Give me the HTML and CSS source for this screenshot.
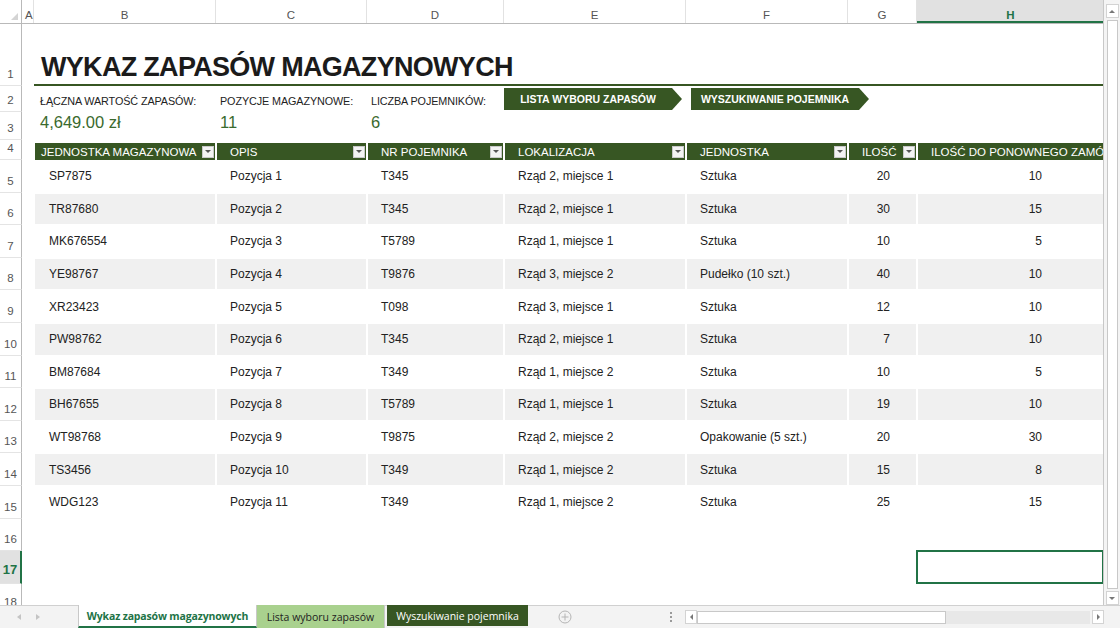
FILE: index.html
```html
<!DOCTYPE html>
<html lang="pl">
<head>
<meta charset="utf-8">
<title>Wykaz zapasów magazynowych</title>
<link rel="stylesheet" href="styles.css">
</head>
<body>
<div class="excel">
  <div class="main">
    <div class="grid">
      <div class="row colheads">
        <div class="corner"><span class="tri"></span></div>
        <div class="ch">A</div>
        <div class="ch">B</div>
        <div class="ch">C</div>
        <div class="ch">D</div>
        <div class="ch">E</div>
        <div class="ch">F</div>
        <div class="ch">G</div>
        <div class="ch sel">H</div>
      </div>

      <div class="row r1">
        <div class="rh">1</div>
        <div></div>
        <div class="title-cell"><h1 class="title">WYKAZ ZAPASÓW MAGAZYNOWYCH</h1></div>
      </div>

      <div class="row r2">
        <div class="rh">2</div>
        <div></div>
        <div class="lbl first">ŁĄCZNA WARTOŚĆ ZAPASÓW:</div>
        <div class="lbl">POZYCJE MAGAZYNOWE:</div>
        <div class="lbl">LICZBA POJEMNIKÓW:</div>
        <div class="btn-cell"><span class="arrow-btn">LISTA WYBORU ZAPASÓW</span></div>
        <div class="btn-cell second"><span class="arrow-btn">WYSZUKIWANIE POJEMNIKA</span></div>
        <div></div>
      </div>

      <div class="row r3">
        <div class="rh">3</div>
        <div></div>
        <div class="val first">4,649.00 zł</div>
        <div class="val">11</div>
        <div class="val">6</div>
        <div></div><div></div><div></div><div></div>
      </div>

      <div class="row r4">
        <div class="rh">4</div>
        <div></div>
        <div class="th first"><span>JEDNOSTKA MAGAZYNOWA</span><i class="flt"></i></div>
        <div class="th"><span>OPIS</span><i class="flt"></i></div>
        <div class="th"><span>NR POJEMNIKA</span><i class="flt"></i></div>
        <div class="th"><span>LOKALIZACJA</span><i class="flt"></i></div>
        <div class="th"><span>JEDNOSTKA</span><i class="flt"></i></div>
        <div class="th"><span>ILOŚĆ</span><i class="flt"></i></div>
        <div class="th last"><span>ILOŚĆ DO PONOWNEGO ZAMÓWIENIA</span></div>
      </div>

      <div class="row dr">
        <div class="rh">5</div><div></div>
        <div class="td">SP7875</div><div class="td">Pozycja 1</div><div class="td">T345</div><div class="td">Rząd 2, miejsce 1</div><div class="td">Sztuka</div><div class="td num">20</div><div class="td num2">10</div>
      </div>
      <div class="row dr alt">
        <div class="rh">6</div><div></div>
        <div class="td">TR87680</div><div class="td">Pozycja 2</div><div class="td">T345</div><div class="td">Rząd 2, miejsce 1</div><div class="td">Sztuka</div><div class="td num">30</div><div class="td num2">15</div>
      </div>
      <div class="row dr">
        <div class="rh">7</div><div></div>
        <div class="td">MK676554</div><div class="td">Pozycja 3</div><div class="td">T5789</div><div class="td">Rząd 1, miejsce 1</div><div class="td">Sztuka</div><div class="td num">10</div><div class="td num2">5</div>
      </div>
      <div class="row dr alt">
        <div class="rh">8</div><div></div>
        <div class="td">YE98767</div><div class="td">Pozycja 4</div><div class="td">T9876</div><div class="td">Rząd 3, miejsce 2</div><div class="td">Pudełko (10 szt.)</div><div class="td num">40</div><div class="td num2">10</div>
      </div>
      <div class="row dr">
        <div class="rh">9</div><div></div>
        <div class="td">XR23423</div><div class="td">Pozycja 5</div><div class="td">T098</div><div class="td">Rząd 3, miejsce 1</div><div class="td">Sztuka</div><div class="td num">12</div><div class="td num2">10</div>
      </div>
      <div class="row dr alt">
        <div class="rh">10</div><div></div>
        <div class="td">PW98762</div><div class="td">Pozycja 6</div><div class="td">T345</div><div class="td">Rząd 2, miejsce 1</div><div class="td">Sztuka</div><div class="td num">7</div><div class="td num2">10</div>
      </div>
      <div class="row dr">
        <div class="rh">11</div><div></div>
        <div class="td">BM87684</div><div class="td">Pozycja 7</div><div class="td">T349</div><div class="td">Rząd 1, miejsce 2</div><div class="td">Sztuka</div><div class="td num">10</div><div class="td num2">5</div>
      </div>
      <div class="row dr alt">
        <div class="rh">12</div><div></div>
        <div class="td">BH67655</div><div class="td">Pozycja 8</div><div class="td">T5789</div><div class="td">Rząd 1, miejsce 1</div><div class="td">Sztuka</div><div class="td num">19</div><div class="td num2">10</div>
      </div>
      <div class="row dr">
        <div class="rh">13</div><div></div>
        <div class="td">WT98768</div><div class="td">Pozycja 9</div><div class="td">T9875</div><div class="td">Rząd 2, miejsce 2</div><div class="td">Opakowanie (5 szt.)</div><div class="td num">20</div><div class="td num2">30</div>
      </div>
      <div class="row dr alt">
        <div class="rh">14</div><div></div>
        <div class="td">TS3456</div><div class="td">Pozycja 10</div><div class="td">T349</div><div class="td">Rząd 1, miejsce 2</div><div class="td">Sztuka</div><div class="td num">15</div><div class="td num2">8</div>
      </div>
      <div class="row dr">
        <div class="rh">15</div><div></div>
        <div class="td">WDG123</div><div class="td">Pozycja 11</div><div class="td">T349</div><div class="td">Rząd 1, miejsce 2</div><div class="td">Sztuka</div><div class="td num">25</div><div class="td num2">15</div>
      </div>
      <div class="row er">
        <div class="rh">16</div>
      </div>
      <div class="row er">
        <div class="rh sel">17</div>
        <div class="selcell"></div>
      </div>
      <div class="row er last">
        <div class="rh">18</div>
      </div>
    </div>
    <div class="vscroll">
      <div class="sb-btn"><i class="up"></i></div>
      <div class="vthumb"></div>
      <div class="sb-btn"><i class="down"></i></div>
    </div>
  </div>

  <div class="tabbar">
    <div class="tabnav">
      <i class="nav-l"></i>
      <i class="nav-r"></i>
    </div>
    <div class="tab active">Wykaz zapasów magazynowych</div>
    <div class="tab light">Lista wyboru zapasów</div>
    <div class="tab dark">Wyszukiwanie pojemnika</div>
    <div class="addtab">
      <svg width="14" height="14" viewBox="0 0 14 14"><circle cx="7" cy="7" r="6" fill="none" stroke="#b5b5b5" stroke-width="1"/><path d="M7 3.5v7M3.5 7h7" stroke="#b5b5b5" stroke-width="1"/></svg>
    </div>
    <div class="dots"><i></i><i></i><i></i></div>
    <div class="hscroll">
      <div class="sb-btn h"><i class="left"></i></div>
      <div class="hthumb"></div>
      <div class="htrack"></div>
      <div class="sb-btn h"><i class="right"></i></div>
    </div>
  </div>
</div>
</body>
</html>
```

FILE: styles.css
```css
* { box-sizing: border-box; }

html, body {
  margin: 0;
  padding: 0;
  background: #ffffff;
}

body {
  width: 1120px;
  height: 628px;
  overflow: hidden;
  font-family: "Liberation Sans", Arial, sans-serif;
  color: #222;
}

.excel {
  display: flex;
  flex-direction: column;
  width: 1120px;
  height: 628px;
}

.main {
  display: flex;
  height: 605px;
  flex: none;
}

.grid {
  width: 1104px;
  height: 605px;
  overflow: hidden;
  border-right: 1px solid #c8c8c8;
}

.row {
  display: grid;
  grid-template-columns: 22px 12px 182px 151px 137px 182px 162px 69px 187px;
}

/* column headers */
.colheads {
  height: 24px;
  border-bottom: 1px solid #b9b9b9;
}

.corner {
  position: relative;
  border-right: 1px solid #b9b9b9;
}

.corner .tri {
  position: absolute;
  right: 3px;
  bottom: 3px;
  width: 0;
  height: 0;
  border-left: 7px solid transparent;
  border-bottom: 7px solid #d4d4d4;
}

.ch {
  font-size: 11.5px;
  color: #555;
  text-align: center;
  padding-top: 9px;
  border-right: 1px solid #e2e2e2;
}

.ch:nth-child(2) {
  text-align: left;
  padding-left: 3px;
}

.ch.sel {
  background: #e1e1e1;
  color: #217346;
  font-weight: bold;
  border-bottom: 2px solid #217346;
  border-right: none;
}

/* row headers */
.rh {
  font-size: 11.5px;
  color: #555;
  text-align: center;
  border-right: 1px solid #b9b9b9;
  border-bottom: 1px solid #e4e4e4;
  display: flex;
  align-items: flex-end;
  justify-content: center;
  padding-bottom: 5px;
}

.er.last .rh {
  align-items: flex-start;
  padding-top: 12px;
  padding-bottom: 0;
}

.rh.sel {
  background: #e1e1e1;
  color: #217346;
  font-weight: bold;
  font-size: 13px;
  border-right: 2px solid #217346;
  padding-bottom: 6px;
}

/* title row */
.r1 { height: 62px; }

.title-cell {
  grid-column: 3 / 10;
  border-bottom: 2px solid #375623;
  display: flex;
  align-items: flex-end;
  padding-left: 7px;
  padding-bottom: 2px;
}

.title {
  margin: 0;
  font-size: 27px;
  font-weight: bold;
  letter-spacing: -0.7px;
  color: #1b1b1b;
  line-height: 30px;
}

/* stats */
.r2 { height: 26px; }
.r3 { height: 28px; }

.lbl {
  font-size: 10.8px;
  color: #222;
  padding-left: 4px;
  padding-top: 9px;
  white-space: nowrap;
  letter-spacing: -0.1px;
}

.lbl.first { padding-left: 6px; }

.btn-cell {
  padding-top: 2px;
}

.btn-cell.second {
  grid-column: span 2;
  padding-left: 5px;
}

.arrow-btn {
  display: flex;
  align-items: center;
  justify-content: center;
  width: 178px;
  height: 22px;
  padding-right: 10px;
  background: #375623;
  color: #fff;
  font-size: 10.5px;
  font-weight: bold;
  clip-path: polygon(0 0, 168px 0, 178px 50%, 168px 100%, 0 100%);
}

.val {
  font-size: 16.5px;
  color: #3a6a2e;
  padding-left: 4px;
  padding-top: 1px;
}

.val.first { padding-left: 6px; }

/* table header */
.r4 { height: 20px; }

.th {
  margin: 3px 1px 0 1px;
  background: #375623;
  color: #fff;
  font-size: 11.5px;
  display: flex;
  align-items: center;
  justify-content: space-between;
  padding-left: 13px;
  padding-right: 1px;
  white-space: nowrap;
  overflow: hidden;
}

.th.first { padding-left: 6px; }

.th.last { margin-right: 0; }

.flt {
  flex: none;
  width: 12px;
  height: 12px;
  background: #f3f3f3;
  border: 1px solid #c9c9c9;
  display: flex;
  align-items: center;
  justify-content: center;
}

.flt::after {
  content: "";
  width: 0;
  height: 0;
  border-left: 3px solid transparent;
  border-right: 3px solid transparent;
  border-top: 3px solid #555;
}

/* data rows */
.dr, .er { height: 32.6px; }

.td {
  margin: 1px;
  font-size: 12px;
  color: #222;
  display: flex;
  align-items: center;
  padding-left: 13px;
  white-space: nowrap;
}

.dr .td:nth-child(3) { padding-left: 14px; }

.dr.alt .td { background: #f0f0f0; }

.td.num {
  justify-content: flex-end;
  padding-right: 26px;
}

.td.num2 {
  justify-content: flex-end;
  padding-right: 62px;
  margin-right: 0;
}

.selcell {
  grid-column: 9;
  border: 2px solid #217346;
  margin-left: -1px;
  margin-top: -1px;
}

/* vertical scrollbar */
.vscroll {
  width: 16px;
  height: 605px;
  background: #f4f4f4;
  display: flex;
  flex-direction: column;
  align-items: center;
  padding: 4px 0 0 0;
}

.sb-btn {
  width: 13px;
  height: 14px;
  border: 1px solid #d3d3d3;
  background: #fff;
  display: flex;
  align-items: center;
  justify-content: center;
  flex: none;
}

.vthumb {
  flex: 1;
  width: 11px;
  margin: 2px 0;
  background: #fff;
  border: 1px solid #c8c8c8;
}

.up, .down, .left, .right { width: 0; height: 0; }

.up {
  border-left: 3px solid transparent;
  border-right: 3px solid transparent;
  border-bottom: 3px solid #777;
}

.down {
  border-left: 3px solid transparent;
  border-right: 3px solid transparent;
  border-top: 3px solid #777;
}

.left {
  border-top: 3px solid transparent;
  border-bottom: 3px solid transparent;
  border-right: 3px solid #777;
}

.right {
  border-top: 3px solid transparent;
  border-bottom: 3px solid transparent;
  border-left: 3px solid #777;
}

/* tab bar */
.tabbar {
  height: 23px;
  flex: none;
  background: #f3f3f3;
  border-top: 1px solid #d0d0d0;
  display: flex;
  align-items: stretch;
  font-family: "Open Sans", "Noto Sans", sans-serif;
  font-size: 10.5px;
}

.tabbar > * { flex: none; }

.tabnav {
  width: 78px;
  display: flex;
  align-items: center;
  padding-left: 17px;
  gap: 15px;
}

.nav-l, .nav-r { width: 0; height: 0; }

.nav-l {
  border-top: 3px solid transparent;
  border-bottom: 3px solid transparent;
  border-right: 4px solid #c4c4c4;
}

.nav-r {
  border-top: 3px solid transparent;
  border-bottom: 3px solid transparent;
  border-left: 4px solid #c4c4c4;
}

.tab {
  display: flex;
  align-items: center;
  justify-content: center;
  white-space: nowrap;
  margin-top: -1px;
}

.tab.active {
  width: 179px;
  background: #fff;
  color: #217346;
  font-weight: 700;
  border-left: 1px solid #c8c8c8;
  border-right: 1px solid #c8c8c8;
  border-bottom: 2px solid #217346;
  letter-spacing: -0.15px;
}

.tab.light {
  width: 128px;
  background: #a9d18e;
  color: #222;
  border-right: 1px solid #c8c8c8;
}

.tab.dark {
  width: 141px;
  background: #375623;
  color: #fff;
  margin-left: 2px;
  margin-bottom: 2px;
}

.addtab {
  width: 46px;
  display: flex;
  align-items: center;
  justify-content: flex-end;
  padding-right: 2px;
}

.dots {
  width: 111px;
  display: flex;
  flex-direction: column;
  align-items: flex-end;
  justify-content: center;
  gap: 2px;
  padding-right: 13px;
}

.dots i {
  width: 2px;
  height: 2px;
  background: #9a9a9a;
}

.hscroll {
  width: 419px;
  display: flex;
  align-items: center;
}

.sb-btn.h {
  width: 12px;
  height: 14px;
}

.hthumb {
  width: 249px;
  height: 13px;
  background: #fff;
  border: 1px solid #c8c8c8;
}

.htrack {
  width: 144px;
  height: 13px;
  background: #e8e8e8;
  margin-right: 2px;
}
```
